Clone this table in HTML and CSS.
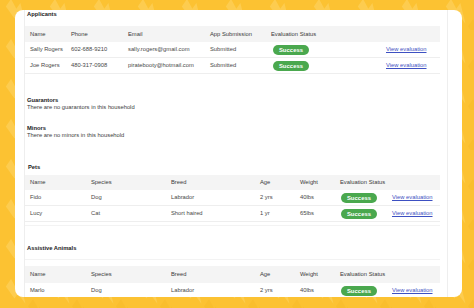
FILE: index.html
```html
<!DOCTYPE html>
<html lang="en">

<head>
    <meta charset="UTF-8">
    <meta name="viewport" content="width=device-width, initial-scale=1.0">
    <title>Household Details</title>
    <link rel="stylesheet" href="styles.css">
</head>

<body>
    <div class="card">
        <div class="panel">
            <!-- Applicants -->
            <section class="block">
                <h2 class="block-title">Applicants</h2>
                <table class="grid grid-applicants">
                    <colgroup>
                        <col class="w-41">
                        <col class="w-57">
                        <col class="w-82">
                        <col class="w-61">
                        <col class="w-115">
                        <col class="w-59">
                    </colgroup>
                    <tr>
                        <th>Name</th>
                        <th>Phone</th>
                        <th>Email</th>
                        <th>App Submission</th>
                        <th>Evaluation Status</th>
                        <th></th>
                    </tr>
                    <tr>
                        <td>Sally Rogers</td>
                        <td>602-688-9210</td>
                        <td>sally.rogers@gmail.com</td>
                        <td>Submitted</td>
                        <td><span class="pill">Success</span></td>
                        <td><a class="eval-link" href="#">View evaluation</a></td>
                    </tr>
                    <tr>
                        <td>Joe Rogers</td>
                        <td>480-317-0908</td>
                        <td>piratebooty@hotmail.com</td>
                        <td>Submitted</td>
                        <td><span class="pill">Success</span></td>
                        <td><a class="eval-link" href="#">View evaluation</a></td>
                    </tr>
                </table>
            </section>

            <!-- Guarantors -->
            <section class="block block-note guarantors">
                <h2 class="block-title">Guarantors</h2>
                <p class="note">There are no guarantors in this household</p>
            </section>

            <!-- Minors -->
            <section class="block block-note minors">
                <h2 class="block-title">Minors</h2>
                <p class="note">There are no minors in this household</p>
            </section>

            <!-- Pets -->
            <section class="block pets">
                <h2 class="block-title">Pets</h2>
                <table class="grid grid-animals">
                    <colgroup>
                        <col class="w-61">
                        <col class="w-80">
                        <col class="w-89">
                        <col class="w-40">
                        <col class="w-40">
                        <col class="w-52">
                        <col class="w-53">
                    </colgroup>
                    <tr>
                        <th>Name</th>
                        <th>Species</th>
                        <th>Breed</th>
                        <th>Age</th>
                        <th>Weight</th>
                        <th>Evaluation Status</th>
                        <th></th>
                    </tr>
                    <tr>
                        <td>Fido</td>
                        <td>Dog</td>
                        <td>Labrador</td>
                        <td>2 yrs</td>
                        <td>40lbs</td>
                        <td><span class="pill">Success</span></td>
                        <td><a class="eval-link" href="#">View evaluation</a></td>
                    </tr>
                    <tr>
                        <td>Lucy</td>
                        <td>Cat</td>
                        <td>Short haired</td>
                        <td>1 yr</td>
                        <td>65lbs</td>
                        <td><span class="pill">Success</span></td>
                        <td><a class="eval-link" href="#">View evaluation</a></td>
                    </tr>
                </table>
            </section>

            <!-- Assistive Animals -->
            <section class="block assistive">
                <h2 class="block-title">Assistive Animals</h2>
                <table class="grid grid-animals">
                    <colgroup>
                        <col class="w-61">
                        <col class="w-80">
                        <col class="w-89">
                        <col class="w-40">
                        <col class="w-40">
                        <col class="w-52">
                        <col class="w-53">
                    </colgroup>
                    <tr>
                        <th>Name</th>
                        <th>Species</th>
                        <th>Breed</th>
                        <th>Age</th>
                        <th>Weight</th>
                        <th>Evaluation Status</th>
                        <th></th>
                    </tr>
                    <tr>
                        <td>Marlo</td>
                        <td>Dog</td>
                        <td>Labrador</td>
                        <td>2 yrs</td>
                        <td>40lbs</td>
                        <td><span class="pill">Success</span></td>
                        <td><a class="eval-link" href="#">View evaluation</a></td>
                    </tr>
                </table>
            </section>
        </div>
    </div>
</body>

</html>
```

FILE: styles.css
```css
body {
    margin: 0;
    height: 308px;
    overflow: hidden;
    background-color: #fcc232;
    /* Yellow with faint diagonal lightning bolts */
    background-image: url("data:image/svg+xml,%3Csvg xmlns='http://www.w3.org/2000/svg' width='44' height='40'%3E%3Cg transform='rotate(-55 22 20)'%3E%3Cpolygon points='18,8 27,8 22,18 29,18 15,34 19,22 13,22' fill='%23fdd465' fill-opacity='0.55'/%3E%3C/g%3E%3Cg transform='translate(22 20) rotate(-55 22 20)'%3E%3Cpolygon points='18,8 27,8 22,18 29,18 15,34 19,22 13,22' fill='%23f6b828' fill-opacity='0.45'/%3E%3C/g%3E%3C/svg%3E");
    background-position: -4px -10px;
    font-family: 'Liberation Sans', Arial, sans-serif;
    font-size: 5.8px;
    line-height: 7px;
    color: #474747;
}

.card {
    margin: 10px 12px 0 15px;
    width: 447px;
    height: 287px;
    background-color: #fff;
    border-radius: 8px;
    overflow: hidden;
}

.panel {
    margin-left: 9px;
    width: 424px;
    height: 100%;
    padding-top: 1px;
    border-left: 1px solid #eee;
    border-right: 1px solid #eee;
    box-sizing: border-box;
}

.block-title {
    margin: 0;
    padding-left: 2px;
    font-size: 5.8px;
    line-height: 7px;
    font-weight: bold;
    color: #222;
}

.note {
    margin: 0;
    padding-left: 2px;
    color: #3c3c3c;
}

.guarantors {
    margin-top: 23px;
}

.minors {
    margin-top: 14px;
}

.pets {
    margin-top: 25px;
    padding-bottom: 3px;
    border-bottom: 1px solid #f3f3f3;
    width: 415px;
}

.pets .block-title {
    padding-left: 3px;
}

.assistive {
    margin-top: 19px;
}

.assistive .block-title {
    padding-bottom: 7px;
    border-bottom: 1px solid #f3f3f3;
    width: 413px;
}

/* Tables */
.grid {
    table-layout: fixed;
    width: 415px;
    border-collapse: collapse;
}

.grid-applicants {
    margin-top: 8px;
}

.pets .grid {
    margin-top: 4px;
}

.assistive .grid {
    margin-top: 6px;
}

.grid th,
.grid td {
    padding: 0 0 0 5px;
    height: 15px;
    text-align: left;
    white-space: nowrap;
    border-bottom: 1px solid #eee;
    /* Light gray row line */
}

.grid th {
    font-weight: normal;
    background-color: #f4f4f4;
    color: #3a3a3a;
    border-bottom: none;
}

.grid-applicants th {
    height: 16px;
}

.assistive .grid th {
    height: 17px;
}

.w-40 { width: 40px; }
.w-41 { width: 41px; }
.w-52 { width: 52px; }
.w-53 { width: 53px; }
.w-57 { width: 57px; }
.w-59 { width: 59px; }
.w-61 { width: 61px; }
.w-80 { width: 80px; }
.w-82 { width: 82px; }
.w-89 { width: 89px; }
.w-115 { width: 115px; }

.pill {
    display: inline-block;
    margin-left: 2px;
    width: 36px;
    height: 10px;
    line-height: 10px;
    border-radius: 5px;
    background-color: #4aa84e;
    /* Green status badge */
    color: #fff;
    font-weight: bold;
    text-align: center;
    vertical-align: middle;
    letter-spacing: 0.1px;
}

.grid-animals .pill {
    margin-left: 1px;
}

.eval-link {
    color: #3d50c2;
    text-decoration: underline;
}
```
